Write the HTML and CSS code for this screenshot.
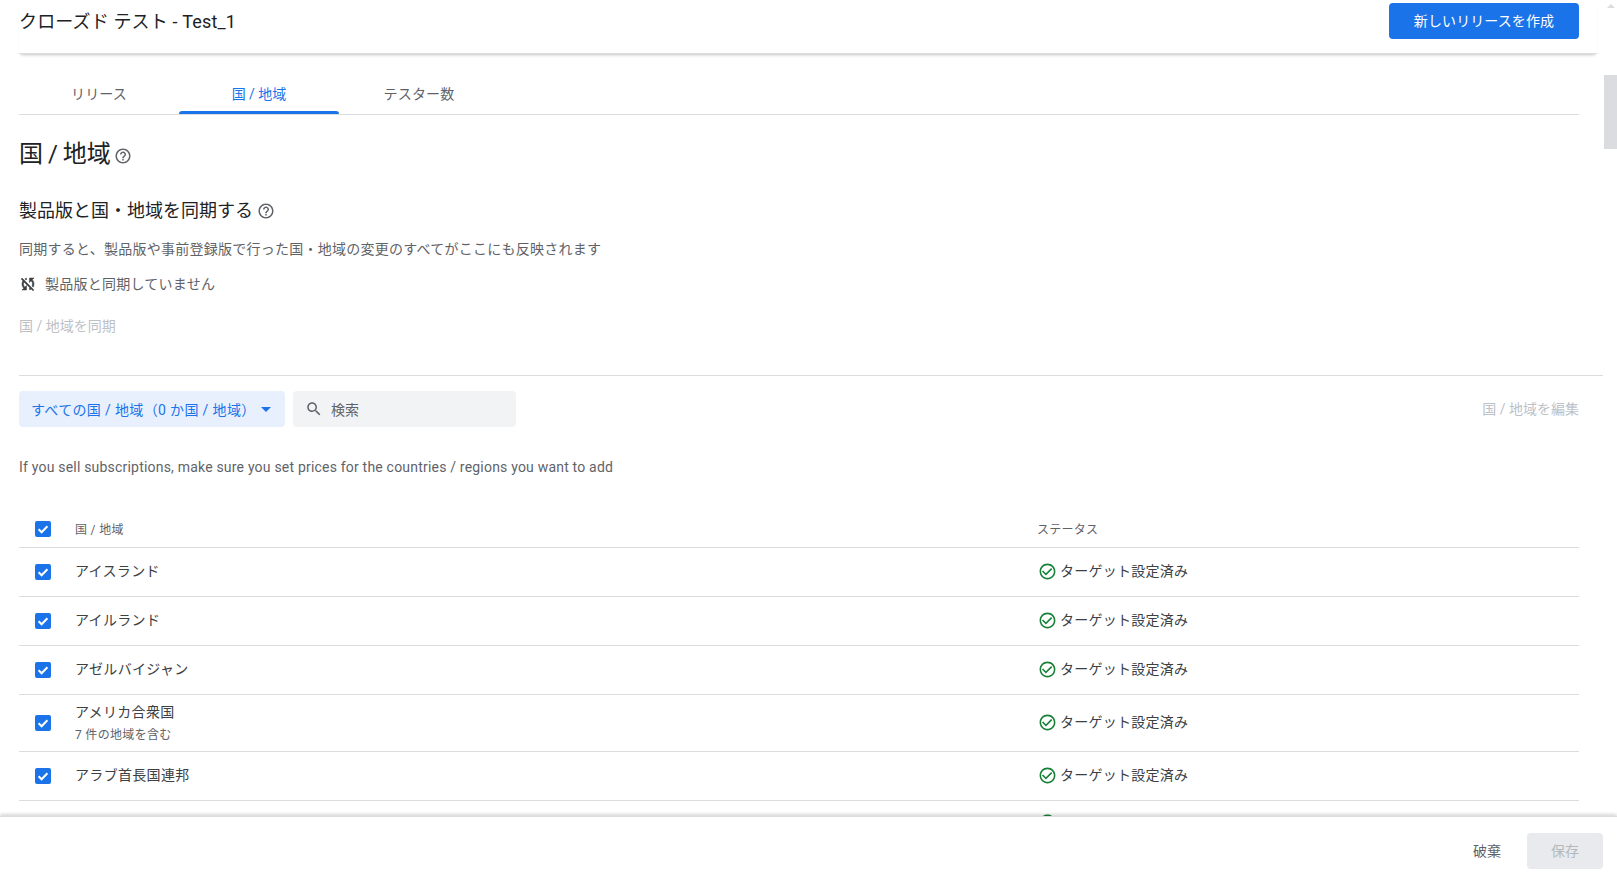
FILE: index.html
```html
<!DOCTYPE html>
<html lang="ja">
<head>
<meta charset="utf-8">
<title>国 / 地域</title>
<link rel="stylesheet" href="styles.css">
</head>
<body>
<svg class="defs" width="0" height="0" aria-hidden="true">
  <symbol id="i-help" viewBox="0 0 24 24"><path d="M11 18h2v-2h-2v2zm1-16C6.48 2 2 6.48 2 12s4.48 10 10 10 10-4.48 10-10S17.52 2 12 2zm0 18c-4.41 0-8-3.59-8-8s3.59-8 8-8 8 3.59 8 8-3.59 8-8 8zm0-14c-2.21 0-4 1.79-4 4h2c0-1.1.9-2 2-2s2 .9 2 2c0 2-3 1.75-3 5h2c0-2.25 3-2.5 3-5 0-2.21-1.79-4-4-4z"/></symbol>
  <symbol id="i-check" viewBox="0 0 24 24"><path d="M16.59 7.58L10 14.17l-3.59-3.58L5 12l5 5 8-8zM12 2C6.48 2 2 6.48 2 12s4.48 10 10 10 10-4.48 10-10S17.52 2 12 2zm0 18c-4.42 0-8-3.58-8-8s3.58-8 8-8 8 3.58 8 8-3.58 8-8 8z"/></symbol>
  <symbol id="i-box" viewBox="0 0 16 16"><rect width="16" height="16" rx="2" fill="#1a73e8"/><path d="M3.6 8.2l3 3 5.8-6" fill="none" stroke="#fff" stroke-width="2"/></symbol>
</svg>
<div class="page">
  <header class="header">
    <div class="title">クローズド テスト - Test_1</div>
    <button class="btn-primary">新しいリリースを作成</button>
  </header>
  <main class="main">
    <nav class="tabs">
      <div class="tab">リリース</div>
      <div class="tab active">国 / 地域</div>
      <div class="tab">テスター数</div>
    </nav>
    <section class="sync">
      <h1 class="h1">国 / 地域<svg class="help h1-help"><use href="#i-help"/></svg></h1>
      <h2 class="h2">製品版と国・地域を同期する<svg class="help h2-help"><use href="#i-help"/></svg></h2>
      <p class="desc">同期すると、製品版や事前登録版で行った国・地域の変更のすべてがここにも反映されます</p>
      <div class="status-line">
        <svg class="sync-icon" viewBox="0 0 24 24"><path d="M10 6.35V4.26c-.8.21-1.55.54-2.23.96l1.46 1.46c.25-.12.5-.24.77-.33zm-7.14-.94l2.36 2.36C4.45 8.99 4 10.44 4 12c0 2.21.91 4.2 2.36 5.64L4 20h6v-6l-2.24 2.24C6.68 15.15 6 13.66 6 12c0-1 .25-1.94.68-2.77l8.08 8.08c-.25.13-.5.25-.77.34v2.09c.8-.21 1.55-.54 2.23-.96l2.36 2.36 1.27-1.27L4.14 4.14 2.86 5.41zM20 4h-6v6l2.24-2.24C17.32 8.85 18 10.34 18 12c0 1-.25 1.94-.68 2.77l1.46 1.46C19.55 15.01 20 13.56 20 12c0-2.21-.91-4.2-2.36-5.64L20 4z"/></svg>
        <span>製品版と同期していません</span>
      </div>
      <div class="disabled-link">国 / 地域を同期</div>
    </section>
    <section class="list">
      <div class="toolbar">
        <div class="filter"><span>すべての国 / 地域（0 か国 / 地域）</span><i class="caret"></i></div>
        <div class="search">
          <svg class="search-icon" viewBox="0 0 24 24"><path d="M15.5 14h-.79l-.28-.27C15.41 12.59 16 11.11 16 9.5 16 5.91 13.09 3 9.5 3S3 5.91 3 9.5 5.91 16 9.5 16c1.61 0 3.09-.59 4.23-1.57l.27.28v.79l5 4.99L20.49 19l-4.99-5zm-6 0C7.01 14 5 11.99 5 9.5S7.01 5 9.5 5 14 7.01 14 9.5 11.99 14 9.5 14z"/></svg>
          <span>検索</span>
        </div>
        <div class="disabled-link edit">国 / 地域を編集</div>
      </div>
      <p class="info">If you sell subscriptions, make sure you set prices for the countries / regions you want to add</p>
      <div class="table">
        <div class="row head">
          <svg class="box"><use href="#i-box"/></svg>
          <div class="name">国 / 地域</div>
          <div class="state">ステータス</div>
        </div>
        <div class="row">
          <svg class="box"><use href="#i-box"/></svg>
          <div class="name">アイスランド</div>
          <div class="state"><svg class="ok"><use href="#i-check"/></svg>ターゲット設定済み</div>
        </div>
        <div class="row">
          <svg class="box"><use href="#i-box"/></svg>
          <div class="name">アイルランド</div>
          <div class="state"><svg class="ok"><use href="#i-check"/></svg>ターゲット設定済み</div>
        </div>
        <div class="row">
          <svg class="box"><use href="#i-box"/></svg>
          <div class="name">アゼルバイジャン</div>
          <div class="state"><svg class="ok"><use href="#i-check"/></svg>ターゲット設定済み</div>
        </div>
        <div class="row tall">
          <svg class="box"><use href="#i-box"/></svg>
          <div class="name">アメリカ合衆国<div class="sub">7 件の地域を含む</div></div>
          <div class="state"><svg class="ok"><use href="#i-check"/></svg>ターゲット設定済み</div>
        </div>
        <div class="row">
          <svg class="box"><use href="#i-box"/></svg>
          <div class="name">アラブ首長国連邦</div>
          <div class="state"><svg class="ok"><use href="#i-check"/></svg>ターゲット設定済み</div>
        </div>
        <div class="row peek">
          <svg class="box"><use href="#i-box"/></svg>
          <div class="name"></div>
          <div class="state"><svg class="ok"><use href="#i-check"/></svg></div>
        </div>
      </div>
    </section>
  </main>
  <footer class="footer">
    <div class="discard">破棄</div>
    <button class="btn-save" disabled>保存</button>
  </footer>
  <div class="scrollbar"><i class="arrow"></i><div class="thumb"></div></div>
</div>
</body>
</html>
```
FILE: styles.css
```css
* { box-sizing: border-box; }
html, body { margin: 0; height: 100%; overflow: hidden; background: #fff; }
body { font-family: Roboto, "Noto Sans CJK JP", sans-serif; color: #3c4043; font-size: 14px; }
.defs { position: absolute; }
.page { position: relative; height: 882px; display: flex; flex-direction: column; overflow: hidden; }

.header { flex: none; height: 54px; margin: 0 20px 0 19px; padding: 3px 18px 0 0; display: flex; justify-content: space-between; align-items: flex-start; border-bottom: 1px solid #dadce0; box-shadow: 0 3px 3px -2px rgba(60,64,67,.3); position: relative; z-index: 1; background: #fff; }
.title { font-size: 18px; line-height: 36px; padding-top: 1px; letter-spacing: .15px; color: #202124; }
.btn-primary { width: 190px; height: 36px; padding: 0 0 2px; border: 0; border-radius: 4px; background: #1a73e8; color: #fff; font: 14px Roboto, "Noto Sans CJK JP", sans-serif; letter-spacing: .1px; }

.main { flex: 1; min-height: 0; overflow: hidden; padding: 0 14px 0 19px; }
.tabs { display: flex; margin: 20px 24px 0 0; height: 41px; border-bottom: 1px solid #dadce0; }
.tab { width: 160px; height: 40px; padding-bottom: 2px; display: flex; align-items: center; justify-content: center; color: #5f6368; letter-spacing: .2px; position: relative; }
.tab.active { color: #1a73e8; letter-spacing: 0; }
.tab.active::after { content: ""; position: absolute; left: 0; right: 0; bottom: 0; height: 3px; background: #1a73e8; border-radius: 3px 3px 0 0; }

.h1 { margin: 21px 0 0; font-size: 24px; font-weight: 400; line-height: 36px; word-spacing: -1px; color: #202124; display: flex; align-items: center; }
.help { fill: #5f6368; }
.h1-help { width: 18px; height: 18px; margin: 3px 0 0 3px; }
.h2 { margin: 25px 0 0; font-size: 18px; font-weight: 400; line-height: 28px; color: #202124; display: flex; align-items: center; }
.h2-help { width: 18px; height: 18px; margin-left: 4px; }
.desc { margin: 14px 0 0; line-height: 20px; letter-spacing: .25px; color: #5f6368; }
.status-line { margin-top: 14px; height: 20px; display: flex; align-items: center; gap: 8px; letter-spacing: .25px; color: #5f6368; }
.sync-icon { width: 18px; height: 18px; margin-top: 2px; fill: #3c4043; stroke: #3c4043; stroke-width: .7; }
.disabled-link { color: #bdc1c6; line-height: 20px; }
.sync > .disabled-link { margin-top: 23px; }

.list { margin-top: 39px; border-top: 1px solid #dadce0; }
.toolbar { display: flex; align-items: center; gap: 8px; margin: 15px 24px 0 0; height: 36px; }
.filter { width: 266px; height: 36px; padding: 0 14px 0 12px; background: #e8f0fe; border-radius: 4px; color: #1a73e8; letter-spacing: .35px; display: flex; align-items: center; justify-content: space-between; }
.caret { width: 0; height: 0; margin-top: 1px; border-left: 5px solid transparent; border-right: 5px solid transparent; border-top: 5px solid #1a73e8; }
.search { width: 223px; height: 36px; padding: 0 12px; background: #f1f3f4; border-radius: 4px; color: #5f6368; display: flex; align-items: center; gap: 8px; }
.search-icon { width: 18px; height: 18px; fill: #5f6368; }
.edit { margin-left: auto; }
.info { margin: 30px 0 0; line-height: 20px; letter-spacing: .2px; color: #5f6368; }

.table { margin: 34px 24px 0 0; }
.row { height: 49px; display: flex; align-items: center; border-bottom: 1px solid #dadce0; color: #3c4043; }
.row.head { height: 37px; font-size: 12px; color: #5f6368; }
.row.tall { height: 57px; }
.box { width: 16px; height: 16px; margin-left: 16px; flex: none; }
.name { width: 962px; margin-left: 24px; padding-bottom: 5px; letter-spacing: .32px; flex: none; }
.row.head .name, .row.head .state { padding-bottom: 2px; }
.row.tall .name { padding-bottom: 3px; }
.sub { font-size: 12px; color: #5f6368; margin-top: 6px; line-height: 16px; }
.state { display: flex; align-items: center; gap: 3px; padding-bottom: 5px; letter-spacing: .25px; }
.ok { width: 19px; height: 19px; margin: 3px 0 0 1px; fill: #188038; }
.row.peek .state { padding-bottom: 8px; }

.footer { flex: none; height: 66px; padding: 16px 14px 12px 0; display: flex; justify-content: flex-end; align-items: flex-start; gap: 26px; background: #fff; border-top: 1px solid #dadce0; box-shadow: 0 -2px 3px rgba(60,64,67,.2); position: relative; z-index: 1; }
.discard { line-height: 36px; color: #5f6368; }
.btn-save { width: 76px; height: 36px; padding: 0 0 3px; border: 0; border-radius: 4px; background: #e8eaed; color: #b4b8bc; font: 14px Roboto, "Noto Sans CJK JP", sans-serif; }

.scrollbar { position: absolute; top: 0; right: 0; width: 13px; height: 100%; z-index: 2; }
.arrow { position: absolute; left: 3px; top: 4px; width: 0; height: 0; border-left: 4px solid transparent; border-right: 4px solid transparent; border-bottom: 4px solid #dadce0; }
.thumb { position: absolute; top: 75px; left: 0; width: 13px; height: 74px; background: #dadce0; }
```
